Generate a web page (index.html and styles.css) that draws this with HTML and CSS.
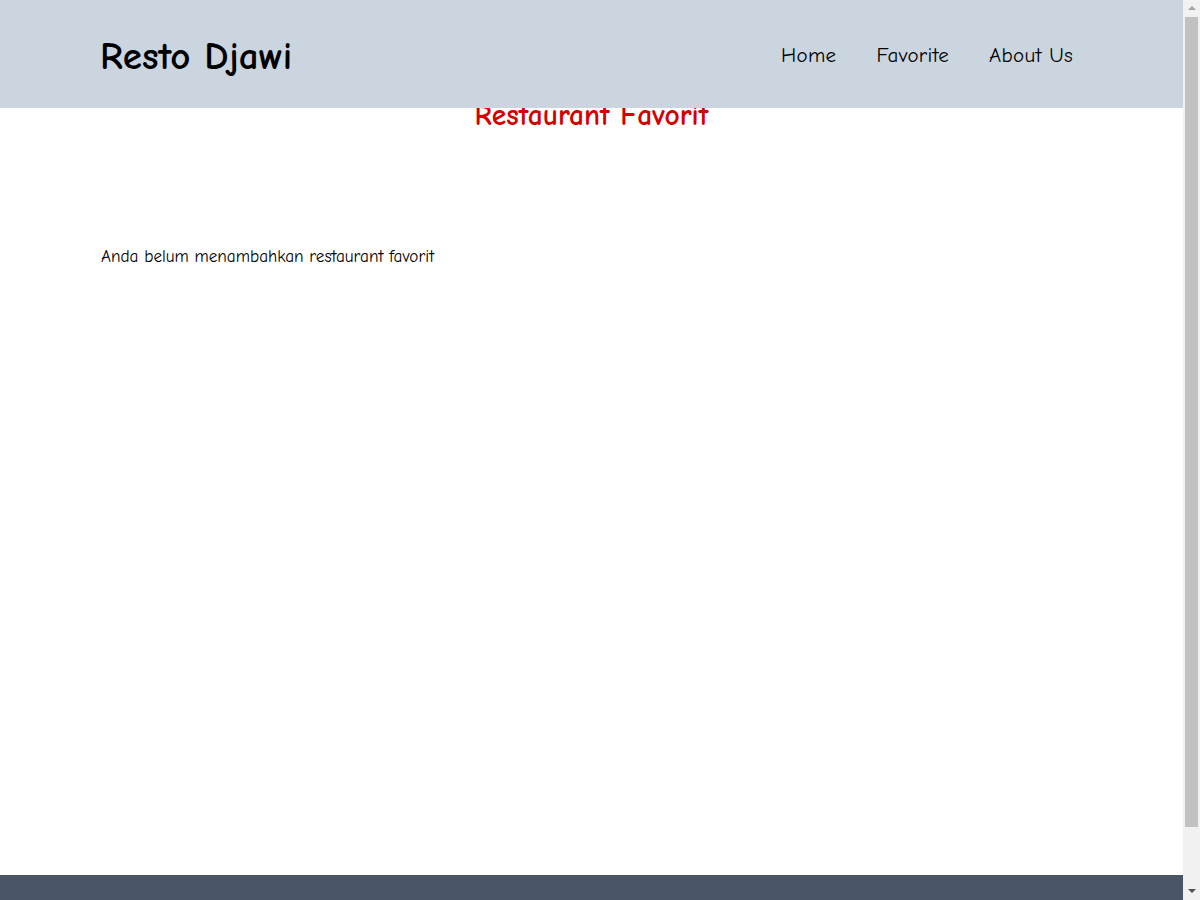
FILE: index.html
```html
<!DOCTYPE html>
<html lang="id">
<head>
<meta charset="utf-8">
<title>Resto Djawi</title>
<link rel="stylesheet" href="styles.css">
</head>
<body>
<header class="app-bar">
  <h1 class="app-bar__brand">Resto Djawi</h1>
  <nav class="app-bar__nav">
    <ul class="nav-list">
      <li><a class="nav-link" href="#/home">Home</a></li>
      <li><a class="nav-link" href="#/favorite">Favorite</a></li>
      <li><a class="nav-link" href="#/about">About Us</a></li>
    </ul>
  </nav>
</header>
<main class="content">
  <h2 class="content__title">Restaurant Favorit</h2>
  <section class="restaurant-list">
    <p class="empty-message">Anda belum menambahkan restaurant favorit</p>
  </section>
</main>
<footer class="footer"></footer>
<div class="scrollbar" aria-hidden="true">
  <div class="scrollbar__arrow scrollbar__arrow--up"></div>
  <div class="scrollbar__track"><div class="scrollbar__thumb"></div></div>
  <div class="scrollbar__arrow scrollbar__arrow--down"></div>
</div>
</body>
</html>
```
FILE: styles.css
```css
* { box-sizing: border-box; }
html, body { margin: 0; padding: 0; }
body {
  padding-right: 17px;
  font-family: "Comic Sans MS", "Comic Neue", cursive;
  color: #000;
  background: #fff;
}
.app-bar {
  position: sticky;
  top: 0;
  height: 108px;
  margin-bottom: -108px;
  background: #cbd5e0;
  display: flex;
  align-items: center;
  justify-content: space-between;
  padding: 0 110px 0 100px;
  z-index: 10;
}
.app-bar__brand {
  margin: 0;
  font-size: 39px;
  font-weight: bold;
  line-height: 1;
  position: relative;
  top: 2px;
}
.nav-list {
  list-style: none;
  margin: 0;
  padding: 0;
  display: flex;
  gap: 40px;
}
.nav-link {
  display: block;
  color: #000;
  text-decoration: none;
  font-size: 21px;
  letter-spacing: 0.3px;
  position: relative;
  top: 1px;
}
.content {
  min-height: 875px;
  padding: 97px 100px 0;
}
.content__title {
  margin: 0;
  text-align: center;
  color: #d40000;
  font-size: 29.5px;
  line-height: 36px;
}
.restaurant-list {
  padding-top: 113px;
}
.empty-message {
  margin: 0 0 0 1px;
  font-size: 17.2px;
  line-height: 20px;
  position: relative;
  top: 1px;
}
.footer {
  height: 92px;
  background: #4a5568;
}
.scrollbar {
  position: fixed;
  top: 0;
  right: 0;
  bottom: 0;
  width: 17px;
  background: #f1f1f1;
  display: flex;
  flex-direction: column;
  z-index: 20;
}
.scrollbar__arrow {
  height: 17px;
  display: flex;
  align-items: center;
  justify-content: center;
}
.scrollbar__arrow::before {
  content: "";
  width: 0;
  height: 0;
  border-left: 4px solid transparent;
  border-right: 4px solid transparent;
}
.scrollbar__arrow--up::before {
  border-bottom: 4px solid #a3a3a3;
  margin-top: -1px;
}
.scrollbar__arrow--down {
  align-items: flex-start;
}
.scrollbar__arrow--down::before {
  border-top: 4px solid #505050;
  margin-top: 6px;
}
.scrollbar__track {
  flex: 1;
  padding: 0 2px;
}
.scrollbar__thumb {
  height: 810px;
  background: #c1c1c1;
}
```
